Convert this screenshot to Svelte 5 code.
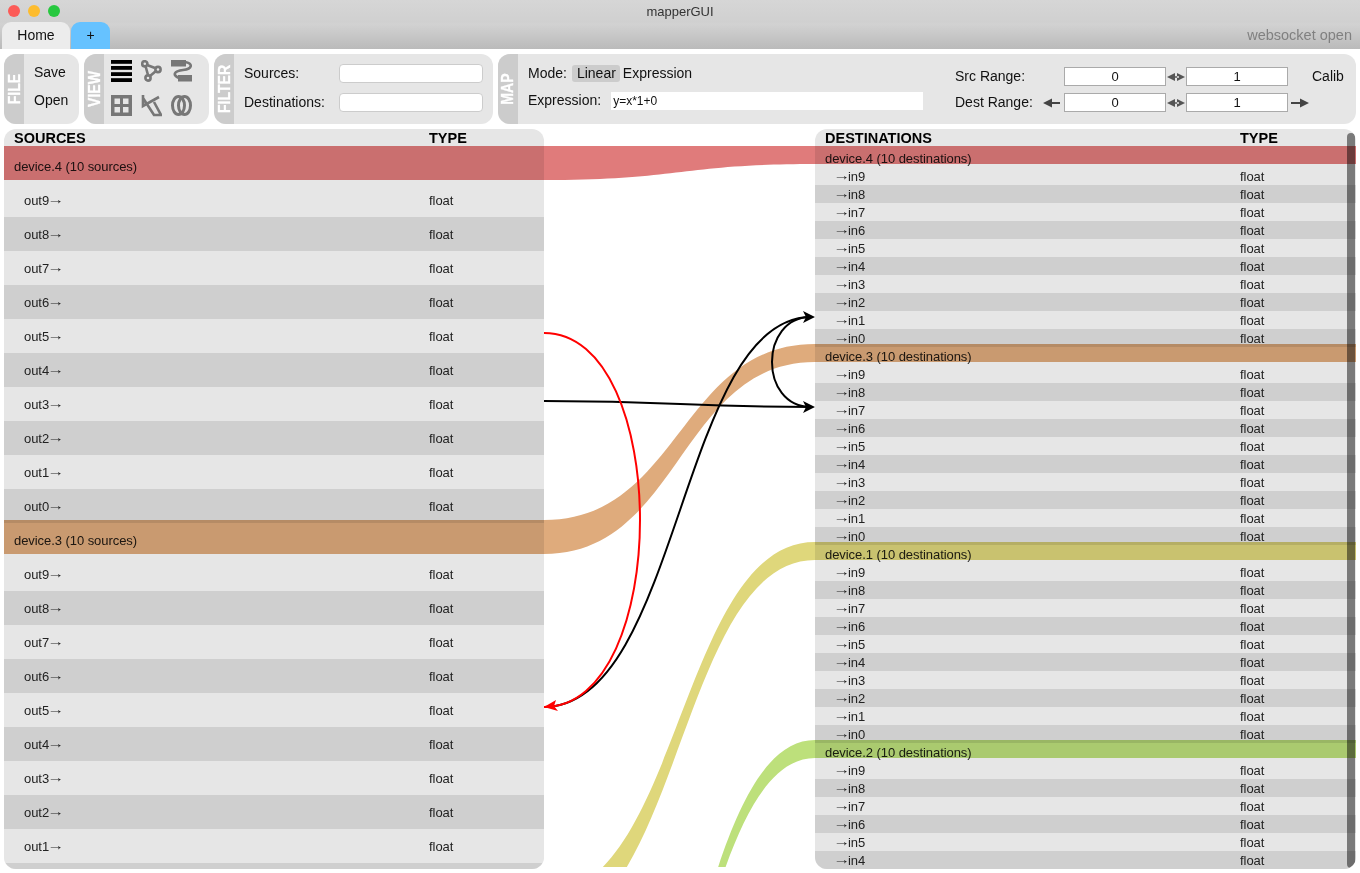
<script>
  const all = [9, 8, 7, 6, 5, 4, 3, 2, 1, 0];
  const sources = [
    { name: 'device.4', rows: all, stub: false },
    { name: 'device.3', rows: all.slice(0, 9), stub: true }
  ];
  const dests = [
    { name: 'device.4', rows: all },
    { name: 'device.3', rows: all },
    { name: 'device.1', rows: all },
    { name: 'device.2', rows: all.slice(0, 6) }
  ];
  const bands = [
    { c: '#e07b7b', d: 'M4,146 H544 C680,146 680,146 815,146 H1356 V164 H815 C680,164 680,180 544,180 H4 Z' },
    { c: '#dfab7c', d: 'M4,520 H544 C680,520 680,344 815,344 H1356 V362 H815 C680,362 680,554 544,554 H4 Z' },
    { c: '#dfd77b', d: 'M1356,542 H815 C680,542 680,894 544,894 V928 C680,928 680,560 815,560 H1356 Z' },
    { c: '#bde07b', d: 'M1356,740 H815 C680,740 680,1268 544,1268 V1302 C680,1302 680,758 815,758 H1356 Z' }
  ];
</script>

<div class="page">
  <header class="chrome">
    <div class="titlebar">
      <span class="light red"></span><span class="light yellow"></span><span class="light green"></span>
      <span class="title">mapperGUI</span>
    </div>
    <div class="tabbar">
      <div class="tab home">Home</div>
      <div class="tab plus">+</div>
      <span class="status">websocket open</span>
    </div>
  </header>

  <section class="toolbar">
    <div class="panel file">
      <div class="strip"><span>FILE</span></div>
      <div class="filebody"><div>Save</div><div>Open</div></div>
    </div>

    <div class="panel view">
      <div class="strip"><span>VIEW</span></div>
      <div class="icons">
        <svg viewBox="0 0 21 22" class="ic">
          <rect x="0" y="0" width="21" height="3.8" fill="#000" /><rect x="0" y="6" width="21" height="3.8" fill="#000" /><rect x="0" y="12.2" width="21" height="3.8" fill="#000" /><rect x="0" y="18.2" width="21" height="3.8" fill="#000" />
        </svg>
        <svg viewBox="0 0 21 22" class="ic" fill="none" stroke="#777" stroke-width="2.6">
          <path d="M4.5,6 L7,15 M9,16 L15,11 M6,5 L14,8" /><circle cx="3.8" cy="3.8" r="2.6" /><circle cx="17" cy="9.5" r="2.6" /><circle cx="7" cy="18" r="2.6" />
        </svg>
        <svg viewBox="0 0 21 22" class="ic">
          <rect x="0" y="0" width="15" height="6.5" fill="#777" /><rect x="7" y="15" width="14" height="6.5" fill="#777" />
          <path d="M14,2 C22,3 22,9 12,10 C3,11 1,15 8,18" fill="none" stroke="#777" stroke-width="2.6" />
        </svg>
        <svg viewBox="0 0 21 22" class="ic">
          <path fill="#777" fill-rule="evenodd" d="M0,0 H21 V21 H0 Z M3.5,3.5 V9 H9 V3.5 Z M12,3.5 V9 H17.5 V3.5 Z M3.5,12 V17.5 H9 V12 Z M12,12 V17.5 H17.5 V12 Z" />
        </svg>
        <svg viewBox="0 0 21 22" class="ic" fill="none" stroke="#777" stroke-width="2.6">
          <path d="M2,0 V11 L18,2 M2,3 L13,20 H21 M13,7 L20,20" />
        </svg>
        <svg viewBox="0 0 21 22" class="ic" fill="none" stroke="#777" stroke-width="3">
          <ellipse cx="7.5" cy="10.5" rx="6" ry="9" /><ellipse cx="13.5" cy="10.5" rx="6" ry="9" />
        </svg>
      </div>
    </div>

    <div class="panel filter">
      <div class="strip"><span>FILTER</span></div>
      <div class="filterbody">
        <label for="fs">Sources:</label><input id="fs" type="text" />
        <label for="fd">Destinations:</label><input id="fd" type="text" />
      </div>
    </div>

    <div class="panel map">
      <div class="strip"><span>MAP</span></div>
      <div class="mapbody">
        <div class="mapleft">
          <div class="moderow"><span>Mode:</span><span class="pill">Linear</span><span class="exprmode">Expression</span></div>
          <div class="exprrow"><span class="lift">Expression:</span><input class="expr" type="text" value="y=x*1+0" /></div>
        </div>
        <div class="ranges">
          <span class="lift">Src Range:</span>
          <span></span>
          <input class="num" value="0" />
          <svg class="dbl" viewBox="0 0 20 10"><path d="M1,5 L9,1 V9 Z M19,5 L11,1 V9 Z M7,4.2 H13 V5.8 H7 Z" fill="#555" /></svg>
          <input class="num" value="1" />
          <span></span>
          <span class="lift">Calib</span>

          <span class="lift">Dest Range:</span>
          <svg class="arr left" viewBox="0 0 18 10"><path d="M0,5 L9,0.5 V4 H17 V6 H9 V9.5 Z" fill="#444" /></svg>
          <input class="num" value="0" />
          <svg class="dbl" viewBox="0 0 20 10"><path d="M1,5 L9,1 V9 Z M19,5 L11,1 V9 Z M7,4.2 H13 V5.8 H7 Z" fill="#555" /></svg>
          <input class="num" value="1" />
          <svg class="arr" viewBox="0 0 18 10"><path d="M18,5 L9,0.5 V4 H0 V6 H9 V9.5 Z" fill="#444" /></svg>
          <span></span>
        </div>
      </div>
    </div>
  </section>

  <main class="tables">
    <div class="table src">
      <div class="thead"><span class="c1">SOURCES</span><span>TYPE</span></div>
      {#each sources as dev}
        <div class="device">{dev.name} (10 sources)</div>
        {#each dev.rows as n, i}
          <div class="row" class:alt={i % 2 === 1}><span class="c1 sig">out{n}<span class="arrow">→</span></span><span>float</span></div>
        {/each}
        {#if dev.stub}<div class="row alt"></div>{/if}
      {/each}
    </div>

    <div class="table dst">
      <div class="thead"><span class="c1">DESTINATIONS</span><span>TYPE</span></div>
      {#each dests as dev}
        <div class="device">{dev.name} (10 destinations)</div>
        {#each dev.rows as n, i}
          <div class="row" class:alt={i % 2 === 1}><span class="c1 sig"><span class="arrow">→</span>in{n}</span><span>float</span></div>
        {/each}
      {/each}
      <div class="scroll"></div>
    </div>
  </main>

  <svg class="overlay bands" viewBox="0 0 1360 867" width="1360" height="867">
    {#each bands as b}
      <path d={b.d} fill={b.c} />
    {/each}
  </svg>

  <svg class="overlay links" viewBox="0 0 1360 867" width="1360" height="867" fill="none">
    <path d="M544,401 C680,401 680,407 811,407" stroke="#000" stroke-width="2" />
    <path d="M544,707 C680,707 680,317 811,317" stroke="#000" stroke-width="2" />
    <path d="M811,317 C759,317 759,407 811,407" stroke="#000" stroke-width="2" />
    <path d="M544,333 C672,333 672,707 544,707" stroke="#f00" stroke-width="2" />
    <polygon points="815,317 803,311 806,317 803,323" fill="#000" />
    <polygon points="815,407 803,401 806,407 803,413" fill="#000" />
    <polygon points="544,707 556,700 554,706 558,711" fill="#f00" />
  </svg>
</div>

<style>
  :global(body) { margin: 0; overflow: hidden; background: #fff; }
  .page {
    position: relative;
    width: 1360px;
    height: 873px;
    overflow: hidden;
    font-family: "Liberation Sans", Arial, sans-serif;
    font-size: 14px;
    color: #111;
  }
  .chrome {
    height: 49px;
    background: linear-gradient(#d6d6d6 0, #d0d0d0 22px, #d2d2d2 24px, #bababa 49px);
  }
  .titlebar {
    position: relative;
    height: 22px;
    display: flex;
    align-items: center;
    gap: 8px;
    padding-left: 8px;
    box-sizing: border-box;
  }
  .light { width: 12px; height: 12px; border-radius: 50%; }
  .red { background: #fc5b57; }
  .yellow { background: #fdbc2e; }
  .green { background: #27c83f; }
  .title {
    position: absolute;
    left: 0; right: 0; top: 0;
    text-align: center;
    line-height: 23px;
    font-size: 13px;
    color: #333;
  }
  .tabbar {
    height: 27px;
    display: flex;
    padding-left: 2px;
    gap: 1px;
  }
  .tab {
    border-radius: 9px 9px 0 0;
    text-align: center;
    line-height: 27px;
    box-sizing: border-box;
  }
  .home { width: 68px; background: #ececec; }
  .plus { width: 39px; background: #66c2ff; }
  .status { margin-left: auto; padding-right: 8px; line-height: 27px; color: #808080; font-size: 14.5px; }

  .toolbar {
    display: flex;
    gap: 5px;
    padding: 5px 4px;
    height: 70px;
  }
  .panel {
    display: flex;
    background: #e6e6e6;
    border-radius: 12px;
    overflow: hidden;
    box-sizing: border-box;
  }
  .file { width: 75px; }
  .view { width: 125px; }
  .filter { width: 279px; }
  .map { width: 858px; }
  .strip {
    width: 20px;
    flex: none;
    background: #ccc;
    display: flex;
    align-items: center;
    justify-content: center;
    overflow: hidden;
  }
  .strip span {
    display: block;
    white-space: nowrap;
    transform: rotate(-90deg) scale(0.88, 1.08);
    font-weight: bold;
    font-size: 16px;
    line-height: 20px;
    color: #fff;
    -webkit-text-stroke: 0.3px #fff;
  }
  .filebody {
    padding: 10px 0 0 10px;
    display: flex;
    flex-direction: column;
    gap: 11px;
    line-height: 17px;
  }
  .icons {
    display: grid;
    grid-template-columns: repeat(3, 21px);
    grid-auto-rows: 22px;
    column-gap: 9px;
    row-gap: 13px;
    padding: 6px 0 0 7px;
  }
  .ic { width: 21px; height: 22px; display: block; }

  .filterbody {
    display: grid;
    grid-template-columns: 95px 144px;
    grid-auto-rows: 19px;
    row-gap: 10px;
    padding: 10px 0 0 10px;
    align-items: center;
  }
  .filterbody label { padding-bottom: 2px; }
  .filterbody input {
    box-sizing: border-box;
    width: 144px;
    height: 19px;
    border: 1px solid #ccc;
    border-radius: 4px;
    background: #fff;
    padding: 0;
  }
  .mapbody {
    flex: 1;
    display: flex;
    justify-content: space-between;
    padding-left: 10px;
  }
  .mapleft { padding-top: 10px; }
  .moderow { display: flex; align-items: center; height: 18px; white-space: pre; }
  .pill { margin-left: 5px; padding: 0 4px 0 5px; background: #ccc; border-radius: 3px; line-height: 17px; }
  .exprmode { margin-left: 3px; }
  .exprrow { display: flex; align-items: center; margin-top: 10px; height: 18px; }
  .lift { padding-bottom: 2px; }
  .expr {
    margin-left: 10px;
    box-sizing: border-box;
    width: 312px;
    height: 18px;
    border: 0;
    background: #fff;
    padding: 0 2px;
    font-family: "Liberation Sans", Arial, sans-serif;
    font-size: 12px;
    color: #111;
  }
  .ranges {
    display: grid;
    grid-template-columns: 88px 21px 102px 20px 102px 24px 44px;
    grid-auto-rows: 19px;
    row-gap: 7px;
    padding-top: 13px;
    align-items: center;
  }
  .num {
    box-sizing: border-box;
    width: 102px;
    height: 19px;
    border: 1px solid #aaa;
    background: #fff;
    padding: 0;
    text-align: center;
    font-family: "Liberation Sans", Arial, sans-serif;
    font-size: 13px;
    color: #111;
  }
  .dbl { width: 20px; height: 10px; justify-self: center; }
  .arr { width: 18px; height: 10px; justify-self: center; }
  .arr.left { justify-self: start; }

  .tables {
    display: flex;
    justify-content: space-between;
    padding: 0 4px;
  }
  .table {
    position: relative;
    height: 740px;
    overflow: hidden;
    border-radius: 12px;
    background: #e6e6e6;
    font-size: 13px;
    letter-spacing: -0.06px;
  }
  .src { width: 540px; }
  .dst { width: 541px; }
  .thead {
    display: flex;
    height: 20px;
    padding: 0 0 0 10px;
    font-weight: bold;
    font-size: 14.5px;
    letter-spacing: 0;
    line-height: 18px;
    color: #000;
  }
  .thead .c1 { width: 415px; }
  .device { padding-left: 10px; color: #222; }
  .row { display: flex; padding-left: 10px; color: #222; background: #e6e6e6; }
  .row.alt { background: #cfcfcf; }
  .row .c1 { width: 415px; }
  .sig { padding-left: 10px; box-sizing: border-box; white-space: nowrap; }
  .arrow {
    display: inline-block;
    letter-spacing: 0;
    transform: translateY(-1px) scaleX(1.3);
  }
  .src .device, .src .row { height: 34px; line-height: 36px; }
  .dst .device, .dst .row { height: 18px; line-height: 20px; }
  .scroll {
    position: absolute;
    right: 1px;
    top: 4px;
    bottom: 1px;
    width: 8px;
    border-radius: 4px;
    background: rgba(0, 0, 0, 0.47);
  }
  .overlay { position: absolute; left: 0; top: 0; pointer-events: none; }
  .bands { mix-blend-mode: multiply; }
</style>
